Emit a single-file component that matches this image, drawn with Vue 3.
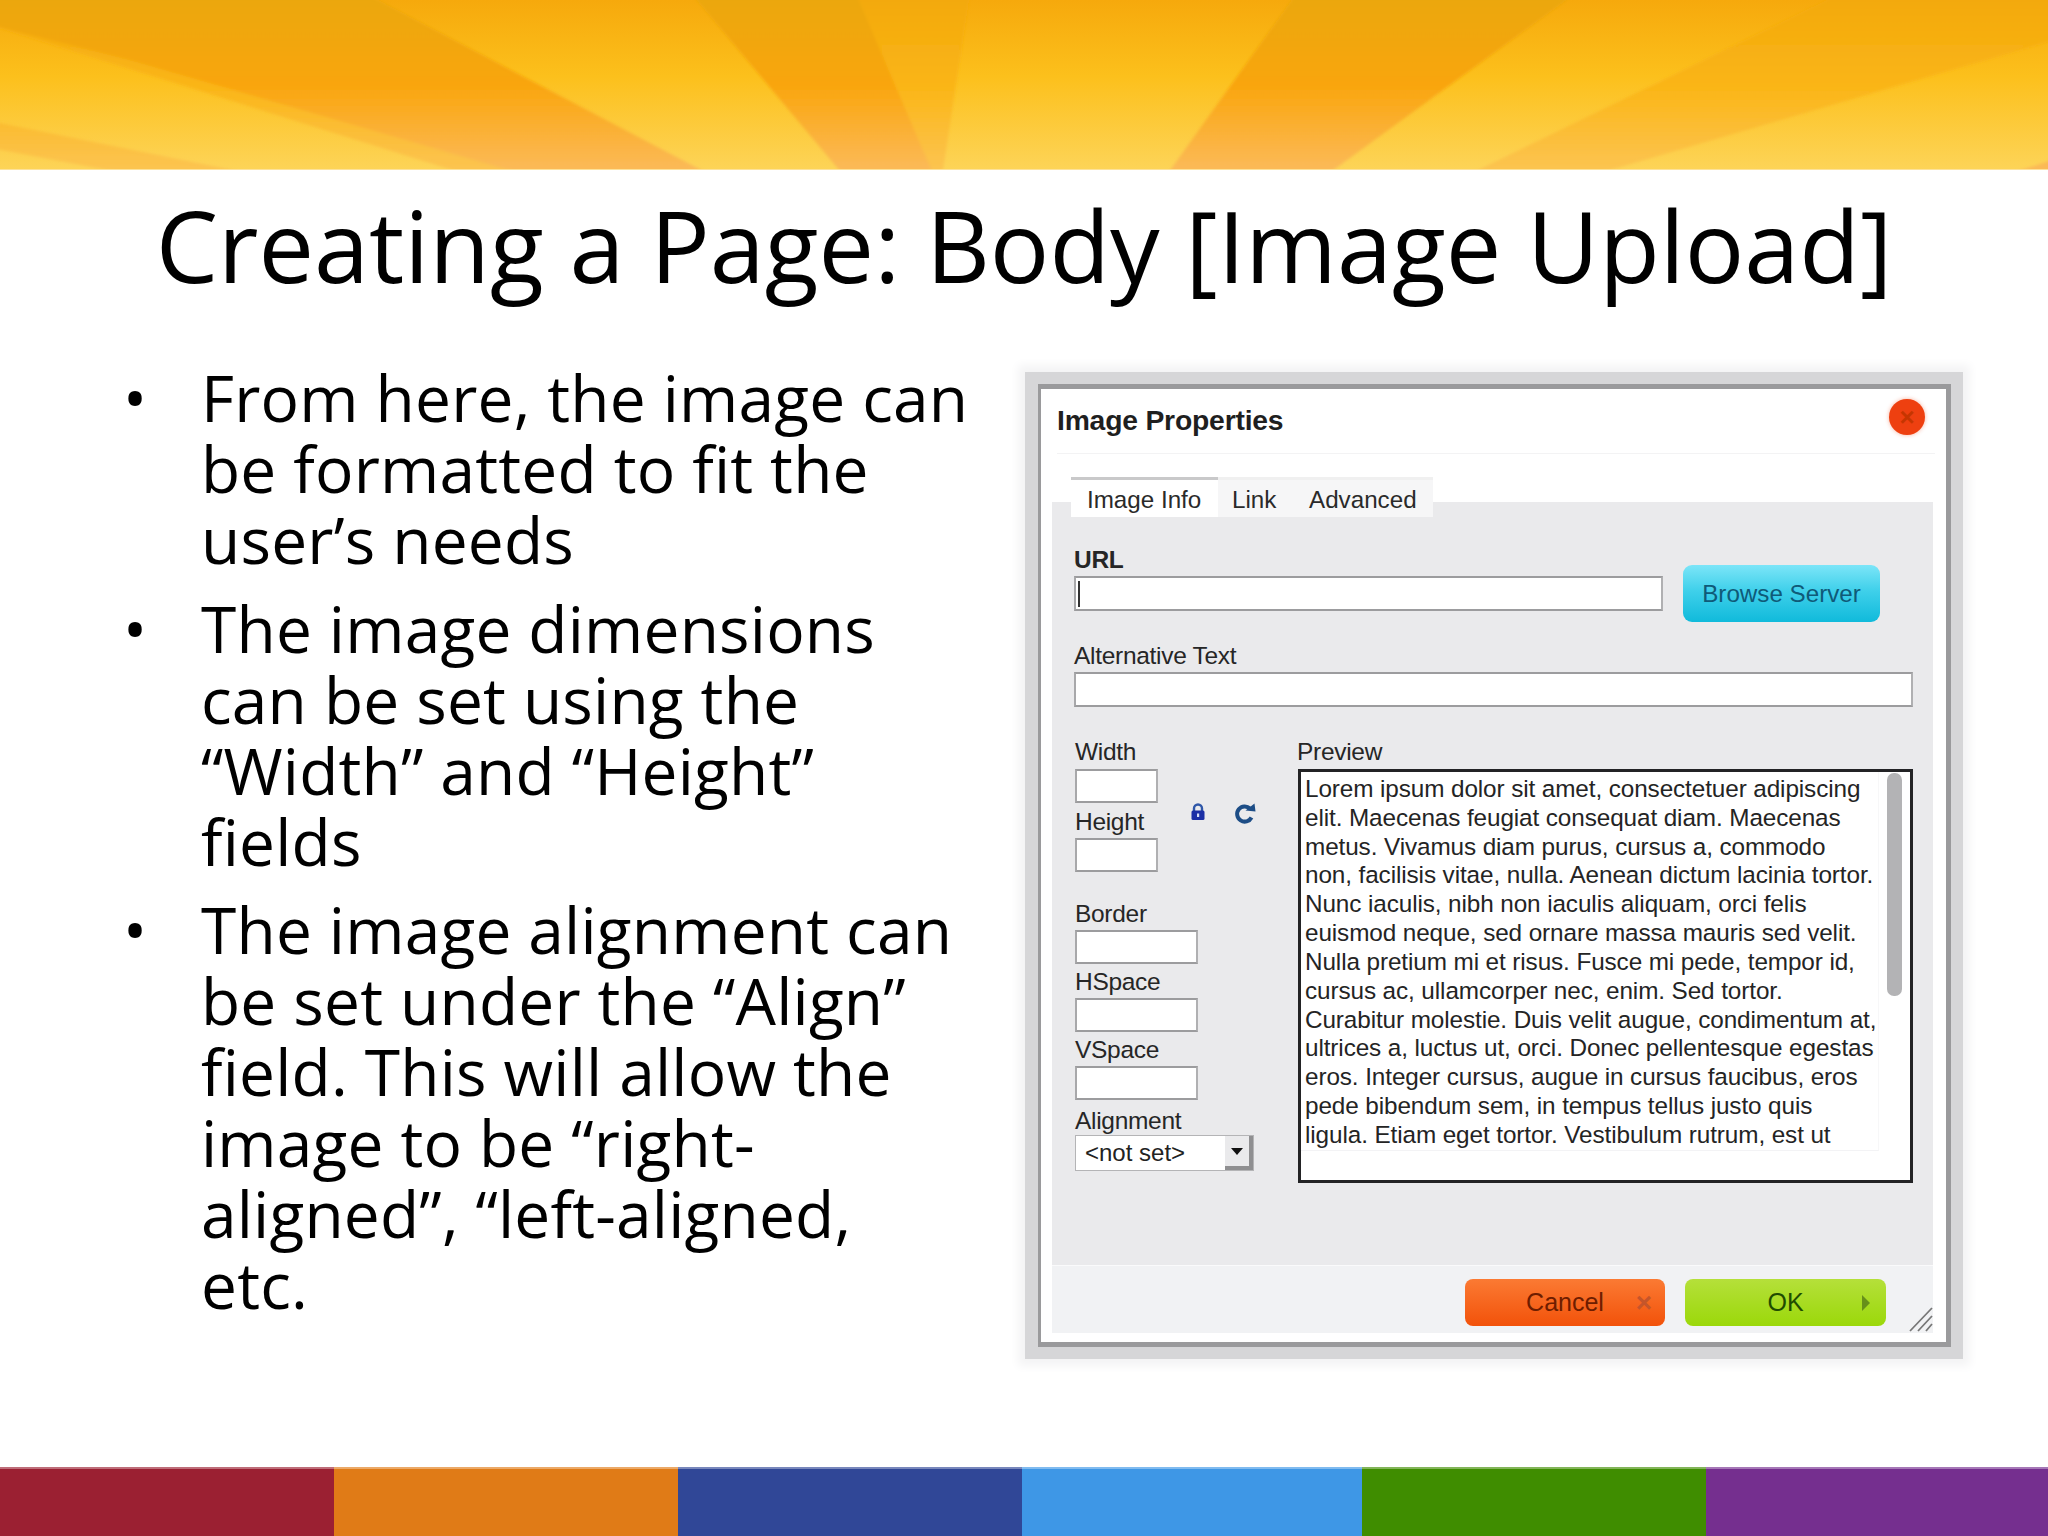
<script setup>
const bullets = [
  ['From here, the image can', 'be formatted to fit the', 'user’s needs'],
  ['The image dimensions', 'can be set using the', '“Width” and “Height”', 'fields'],
  ['The image alignment can', 'be set under the “Align”', 'field. This will allow the', 'image to be “right-', 'aligned”, “left-aligned,', 'etc.']
]
const preview = [
  'Lorem ipsum dolor sit amet, consectetuer adipiscing',
  'elit. Maecenas feugiat consequat diam. Maecenas',
  'metus. Vivamus diam purus, cursus a, commodo',
  'non, facilisis vitae, nulla. Aenean dictum lacinia tortor.',
  'Nunc iaculis, nibh non iaculis aliquam, orci felis',
  'euismod neque, sed ornare massa mauris sed velit.',
  'Nulla pretium mi et risus. Fusce mi pede, tempor id,',
  'cursus ac, ullamcorper nec, enim. Sed tortor.',
  'Curabitur molestie. Duis velit augue, condimentum at,',
  'ultrices a, luctus ut, orci. Donec pellentesque egestas',
  'eros. Integer cursus, augue in cursus faucibus, eros',
  'pede bibendum sem, in tempus tellus justo quis',
  'ligula. Etiam eget tortor. Vestibulum rutrum, est ut'
]
const stripes = [
  { w: 334, c: '#9b2032' }, { w: 344, c: '#e07b17' }, { w: 344, c: '#304797' },
  { w: 340, c: '#3e97e6' }, { w: 344, c: '#3f8d00' }, { w: 342, c: '#752f8f' }
]
</script>

<template>
  <div class="slide">
    <svg class="banner" viewBox="0 0 2048 170" preserveAspectRatio="none" width="2048" height="170">
      <defs>
        <linearGradient id="bg" x1="0" y1="0" x2="0" y2="1">
          <stop offset="0" stop-color="#f6a90c" />
          <stop offset="0.45" stop-color="#fcc01c" />
          <stop offset="1" stop-color="#fdd458" />
        </linearGradient>
        <linearGradient id="ray" x1="0" y1="0" x2="0" y2="170" gradientUnits="userSpaceOnUse">
          <stop offset="0" stop-color="#eba70c" />
          <stop offset="0.5" stop-color="#f9a50d" />
          <stop offset="1" stop-color="#fbba58" />
        </linearGradient>
        <linearGradient id="ray2" x1="0" y1="0" x2="0" y2="170" gradientUnits="userSpaceOnUse">
          <stop offset="0" stop-color="#f3a90d" />
          <stop offset="0.5" stop-color="#fab515" />
          <stop offset="1" stop-color="#fcc451" />
        </linearGradient>
        <filter id="soft" x="-5%" y="-5%" width="110%" height="110%">
          <feGaussianBlur stdDeviation="1.6" />
        </filter>
      </defs>
      <rect width="2048" height="170" fill="url(#bg)" />
      <g filter="url(#soft)">
        <polygon points="-20,-20 340,-20 716,190 516,190 -20,22" fill="url(#ray2)" />
        <polygon points="-20,-20 340,-20 705,172 516,172 130,60 -20,22" fill="url(#ray)" />
        <polygon points="680,-20 972,-20 940,190 856,190" fill="url(#ray2)" />
        <polygon points="680,-20 850,-20 940,190 856,190" fill="url(#ray)" />
        <polygon points="1306,-20 1594,-20 1306,190 1156,190" fill="url(#ray)" />
        <polygon points="1868,-20 2068,-20 2068,36 1542,190 1437,190" fill="url(#ray2)" />
        <polygon points="-20,119 242,172 118,172 -20,146" fill="url(#ray2)" />
        <polygon points="2068,155 2068,190 1959,190" fill="url(#ray)" />
      </g>
      <rect y="169" width="2048" height="1" fill="#fde29a" />
    </svg>

    <h1 class="title">Creating a Page: Body [Image Upload]</h1>

    <main class="content">
      <ul class="bullets">
        <li v-for="(b, i) in bullets" :key="i" class="bullet">
          <span class="dot">•</span>
          <span class="lines"><span v-for="l in b" :key="l" class="line">{{ l }}</span></span>
        </li>
      </ul>

      <section class="halo">
        <div class="frame">
          <div class="card">
            <header class="head">
              <span class="head-title">Image Properties</span>
              <span class="close"><span class="close-x">×</span></span>
            </header>

            <nav class="tabs">
              <span class="tab first">Image Info</span>
              <span class="tab link">Link</span>
              <span class="tab adv">Advanced</span>
            </nav>

            <div class="body">
              <div class="lbl url-lbl">URL</div>
              <div class="url-row">
                <div class="input url-input"><span class="caret"></span></div>
                <button class="browse">Browse Server</button>
              </div>
              <div class="lbl alt-lbl">Alternative Text</div>
              <div class="input alt-input"></div>

              <div class="cols">
                <div class="left">
                  <div class="size-group">
                    <div class="size-fields">
                      <div class="lbl">Width</div>
                      <div class="input small"></div>
                      <div class="lbl next height-lbl">Height</div>
                      <div class="input small"></div>
                    </div>
                    <div class="ratio">
                      <svg width="16" height="18" viewBox="0 0 16 18">
                        <path d="M4 8V5.5a4 4 0 0 1 8 0V8" fill="none" stroke="#2f57a8" stroke-width="2.4" />
                        <rect x="1.5" y="7.5" width="13" height="9.5" rx="1.5" fill="#1c2fa6" />
                        <rect x="7" y="10.5" width="2.2" height="3.5" fill="#d8def5" />
                      </svg>
                      <svg width="24" height="22" viewBox="0 0 24 22">
                        <path d="M18.5 14.5A7.6 7.6 0 1 1 17 5.5" fill="none" stroke="#1d4d86" stroke-width="4" />
                        <path d="M12.5 7.5 L22.5 8.5 L21.5 0.5 Z" fill="#1d4d86" />
                      </svg>
                    </div>
                  </div>
                  <div class="lbl gap-lg">Border</div>
                  <div class="input wide"></div>
                  <div class="lbl next">HSpace</div>
                  <div class="input wide"></div>
                  <div class="lbl next">VSpace</div>
                  <div class="input wide"></div>
                  <div class="lbl next align-lbl">Alignment</div>
                  <div class="select">
                    <span class="select-text">&lt;not set&gt;</span>
                    <span class="select-btn"><i class="arrow"></i></span>
                  </div>
                </div>
                <div class="right">
                  <div class="lbl prev-lbl">Preview</div>
                  <div class="preview">
                    <div class="preview-scroll">
                      <div class="preview-text">
                        <div v-for="l in preview" :key="l" class="preview-line">{{ l }}</div>
                      </div>
                      <div class="track"><div class="thumb"></div></div>
                    </div>
                  </div>
                </div>
              </div>
            </div>

            <footer class="foot">
              <button class="btn cancel">Cancel<span class="btn-icon cancel-x">×</span></button>
              <button class="btn ok">OK<span class="btn-icon ok-tri"></span></button>
              <svg class="grip" width="24" height="26" viewBox="0 0 24 26">
                <path d="M1 25 L23 2 M9 25 L23 10 M17 25 L23 18" stroke="#777" stroke-width="1.8" fill="none" />
              </svg>
            </footer>
          </div>
        </div>
      </section>
    </main>

    <div class="stripes">
      <span v-for="s in stripes" :key="s.c" class="stripe" :style="{ width: s.w + 'px', background: s.c }"></span>
    </div>
  </div>
</template>

<style>
html, body { margin: 0; background: #fff; }
</style>

<style scoped>
.slide {
  width: 2048px;
  height: 1536px;
  display: flex;
  flex-direction: column;
  overflow: hidden;
  background: #fff;
  color: #000;
  font-family: "Open Sans", "Lato", sans-serif;
}
.banner { display: block; flex: none; }
.title {
  margin: 22px 0 0;
  height: 106px;
  line-height: 106px;
  text-align: center;
  font-size: 99px;
  font-weight: 400;
  white-space: nowrap;
  flex: none;
}
.content {
  flex: 1;
  display: flex;
  min-height: 0;
  position: relative;
}
.bullets {
  list-style: none;
  margin: 64px 0 0;
  padding: 0 0 0 122px;
  width: 1015px;
  box-sizing: border-box;
  flex: none;
}
.bullet {
  display: flex;
  margin-bottom: 17.5px;
  font-size: 64px;
  line-height: 71px;
  letter-spacing: 0.2px;
}
.dot { width: 78px; padding-left: 1px; flex: none; }
.lines { display: flex; flex-direction: column; white-space: nowrap; }
.line { display: block; }

.halo {
  flex: none;
  align-self: flex-start;
  margin-top: 64px;
  padding: 10px 12px 11px 10px;
}
.frame {
  padding: 12px 12px 12px 13px;
  background: #d6d6d8;
  box-shadow: 0 0 9px 7px #f4f4f5;
}
.card {
  width: 905px;
  height: 953px;
  display: flex;
  flex-direction: column;
  background: #fff;
  border-style: solid;
  border-color: #9a9a9c;
  border-width: 5px 5px 5px 3px;
  margin: 0;
  box-sizing: content-box;
  font-family: "Liberation Sans", Arial, sans-serif;
  color: #1f1f1f;
  font-size: 25px;
  position: relative;
}
.head {
  height: 64px;
  margin: 0 11px 0 16px;
  display: flex;
  align-items: center;
  justify-content: space-between;
  border-bottom: 1px solid #f3f3f4;
  box-sizing: content-box;
  flex: none;
}
.head-title { font-weight: 700; font-size: 28.3px; letter-spacing: -0.2px; padding-bottom: 1px; }
.close {
  width: 36px;
  height: 36px;
  margin: 0 10px 8px 0;
  border-radius: 50%;
  background: #ee4010;
  display: flex;
  align-items: center;
  justify-content: center;
  box-shadow: 0 0 4px rgba(238, 64, 16, .4);
}
.close-x { color: #c63500; font-size: 26px; line-height: 26px; font-weight: 700; }
.tabs {
  margin: 23px 0 -15px 30px;
  height: 40px;
  display: flex;
  position: relative;
  flex: none;
}
.tab {
  display: block;
  height: 37px;
  line-height: 40px;
  background: #f6f6f7;
  border-top: 3px solid #f0f0f0;
  color: #2a2a2a;
  font-size: 24.2px;
}
.tab.first { width: 131px; padding-left: 16px; background: #fff; border-top-color: #c9c9ca; }
.tab.link { width: 60px; padding-left: 14px; }
.tab.adv { width: 124px; padding-left: 17px; }
.body {
  margin: 0 13px 0 11px;
  height: 763px;
  padding: 44px 20px 0 22px;
  box-sizing: border-box;
  background: #eaeaec;
  flex: none;
}
.lbl {
  height: 26px;
  line-height: 26px;
  color: #262626;
  font-size: 24.5px;
  letter-spacing: -0.3px;
  white-space: nowrap;
}
.url-lbl { font-weight: 700; height: 19px; line-height: 28px; }
.url-row { display: flex; align-items: center; gap: 20px; height: 57px; }
.input {
  background: #fff;
  border: 2px solid #9c9c9e;
  border-left-color: #a8a8aa;
  border-right-color: #b0b0b2;
  box-sizing: border-box;
}
.url-input { width: 589px; height: 35px; position: relative; }
.caret { position: absolute; left: 2px; top: 3px; width: 2px; height: 26px; background: #333; }
.browse {
  width: 197px;
  height: 57px;
  border: none;
  border-radius: 9px;
  background: linear-gradient(#7ce5f8, #3fd0ea 45%, #10badb);
  color: #0f5a78;
  font-family: inherit;
  font-size: 24.2px;
  padding: 0;
  flex: none;
}
.alt-lbl { margin-top: 21px; margin-bottom: 3px; }
.alt-input { width: 839px; height: 35px; }
.cols { display: flex; margin-top: 32px; }
.left { width: 223px; margin-left: 1px; flex: none; }
.size-group { display: flex; }
.size-fields { width: 83px; flex: none; }
.size-fields .lbl:first-child { margin-bottom: 4px; }
.lbl.next.height-lbl { margin-top: 6px; margin-bottom: 3px; }
.ratio {
  display: flex;
  align-items: flex-start;
  gap: 27px;
  margin-left: 32px;
  padding-top: 64px;
}
.small { width: 83px; height: 34px; }
.wide { width: 123px; height: 34px; }
.lbl.next { margin-top: 5px; margin-bottom: 3px; }
.lbl.gap-lg { margin-top: 29px; margin-bottom: 3px; }
.lbl.align-lbl { margin-top: 8px; margin-bottom: 1px; }
.select {
  width: 179px;
  height: 36px;
  display: flex;
  justify-content: space-between;
  background: #fff;
  border: 1px solid #b4b4b6;
  box-sizing: border-box;
}
.select-text { padding-left: 9px; font-size: 24px; line-height: 34px; color: #222; }
.select-btn {
  width: 28px;
  background: #eaeaec;
  border-right: 4px solid #8f8f91;
  border-bottom: 4px solid #8f8f91;
  display: flex;
  align-items: center;
  justify-content: center;
  box-sizing: border-box;
}
.arrow {
  width: 0;
  height: 0;
  border-left: 6px solid transparent;
  border-right: 6px solid transparent;
  border-top: 7px solid #111;
}
.right { width: 615px; flex: none; }
.prev-lbl { margin-left: -1px; margin-bottom: 4px; }
.preview {
  width: 615px;
  height: 414px;
  border: 3px solid #232325;
  box-sizing: border-box;
  background: #fff;
  overflow: hidden;
}
.preview-scroll { display: flex; height: 379px; }
.preview-text {
  width: 578px;
  padding: 3px 0 0 4px;
  box-sizing: border-box;
  border-right: 1px solid #f7f7f8;
  border-bottom: 1px solid #f3f3f5;
  flex: none;
}
.preview-line {
  height: 28.84px;
  line-height: 28.84px;
  font-size: 24.3px;
  letter-spacing: -0.1px;
  white-space: nowrap;
  color: #242424;
}
.track {
  flex: 1;
  display: flex;
  justify-content: center;
  padding-top: 1px;
}
.thumb { width: 15px; height: 223px; border-radius: 7px; background: #b3b3b5; }
.foot {
  flex: none;
  height: 68px;
  margin: 0 13px 9px 11px;
  padding: 13px 47px 0 0;
  box-sizing: border-box;
  background: #f1f2f4;
  border-top: 1px solid #fafafb;
  display: flex;
  justify-content: flex-end;
  align-items: flex-start;
  gap: 20px;
  position: relative;
}
.btn {
  height: 47px;
  border: none;
  border-radius: 8px;
  font-family: inherit;
  font-size: 25px;
  padding: 0;
  position: relative;
  flex: none;
}
.cancel { width: 200px; background: linear-gradient(#fb7a33, #f2520a); color: #6e1d00; }
.ok { width: 201px; background: linear-gradient(#b5e03a, #9bd80a); color: #1f4c00; }
.btn-icon { position: absolute; top: 50%; }
.cancel-x { right: 13px; color: #c5552a; font-size: 28px; font-weight: 700; line-height: 28px; margin-top: -14px; }
.ok-tri {
  right: 16px;
  margin-top: -8px;
  width: 0;
  height: 0;
  border-top: 8px solid transparent;
  border-bottom: 8px solid transparent;
  border-left: 8px solid #67901a;
}
.grip { position: absolute; right: 0; bottom: 1px; }
.stripes { height: 69px; display: flex; flex: none; }
.stripe { display: block; height: 100%; box-shadow: inset 0 2px rgba(255, 255, 255, .35); }
</style>
